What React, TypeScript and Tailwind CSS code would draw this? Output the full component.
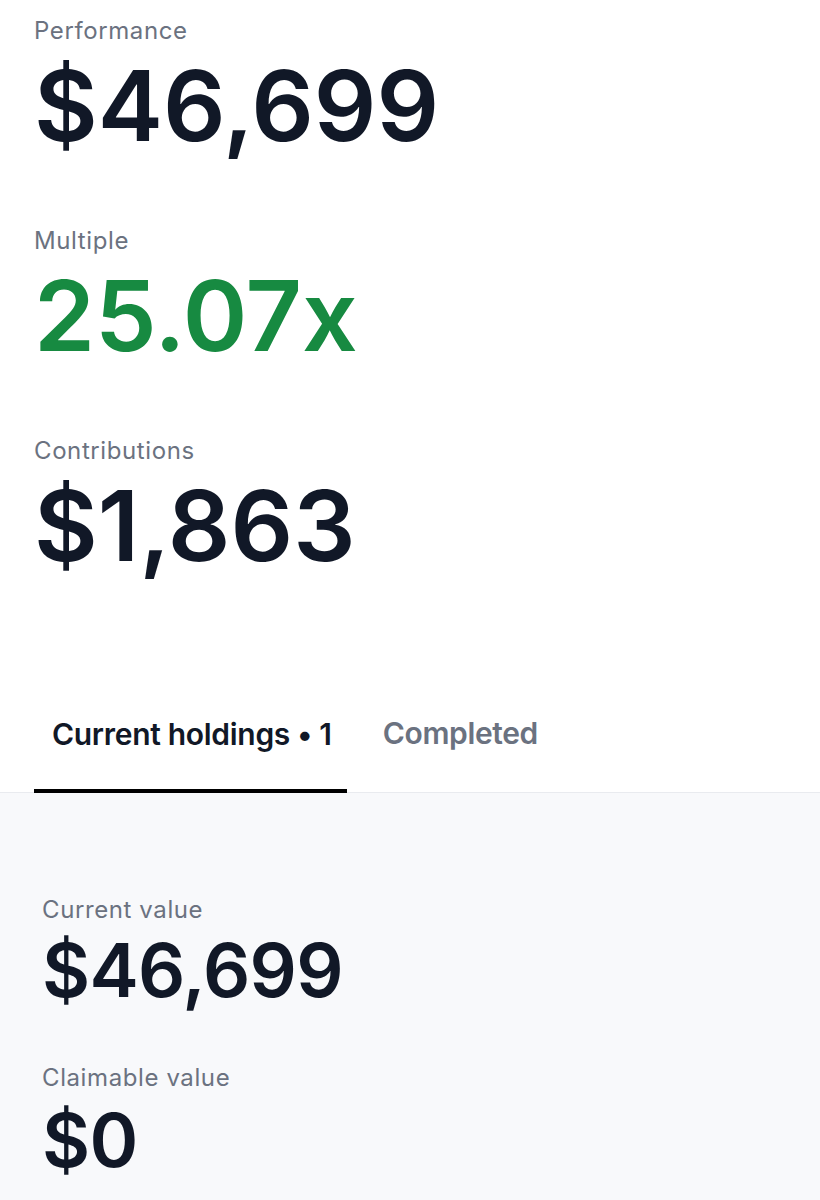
import React from "react";

type Stat = { label: string; value: string; tone?: "green" };

const topStats: Stat[] = [
  { label: "Performance", value: "$46,699" },
  { label: "Multiple", value: "25.07x", tone: "green" },
  { label: "Contributions", value: "$1,863" },
];

function BigStat({ stat, first }: { stat: Stat; first?: boolean }) {
  return (
    <div className={first ? "" : "mt-[74px]"}>
      <p className="text-[24px] leading-none tracking-[0.025em] text-[#6b7280]">{stat.label}</p>
      <p
        className={`mt-[14px] text-[98px] leading-none font-semibold ${
          stat.tone === "green" ? "text-[#178a41]" : "text-[#111827]"
        }`}
      >
        {stat.value}
      </p>
    </div>
  );
}

export default function App() {
  return (
    <div className="w-[820px] min-h-[1200px] bg-white font-['Inter',sans-serif] antialiased">
      {/* Summary figures */}
      <section className="px-[34px] pt-[19px]">
        {topStats.map((s, i) => (
          <BigStat key={s.label} stat={s} first={i === 0} />
        ))}
      </section>

      {/* Tabs */}
      <div className="mt-[143px] flex items-end gap-[19px] px-[34px] border-b border-[#e9ebef]">
        <button className="pl-[18px] pr-[15px] pb-[40px] border-b-4 border-black -mb-px text-[30px] leading-none font-semibold text-[#111827] tracking-[-0.01em]">
          Current holdings • 1
        </button>
        <button className="px-[17px] pb-[44px] text-[30px] leading-none font-semibold text-[#6b7280] tracking-[-0.012em]">
          Completed
        </button>
      </div>

      {/* Holdings */}
      <section className="bg-[#f8f9fb] min-h-[407px] pl-[42px] pt-[105px]">
        <p className="text-[24px] leading-none tracking-[0.025em] text-[#6b7280]">Current value</p>
        <p className="mt-[11px] text-[74px] leading-none font-semibold text-[#111827] tracking-[-0.01em]">
          $46,699
        </p>
        <p className="mt-[59px] text-[24px] leading-none tracking-[0.025em] text-[#6b7280]">
          Claimable value
        </p>
        <p className="mt-[13px] text-[74px] leading-none font-semibold text-[#111827] tracking-[-0.01em]">
          $0
        </p>
      </section>
    </div>
  );
}
